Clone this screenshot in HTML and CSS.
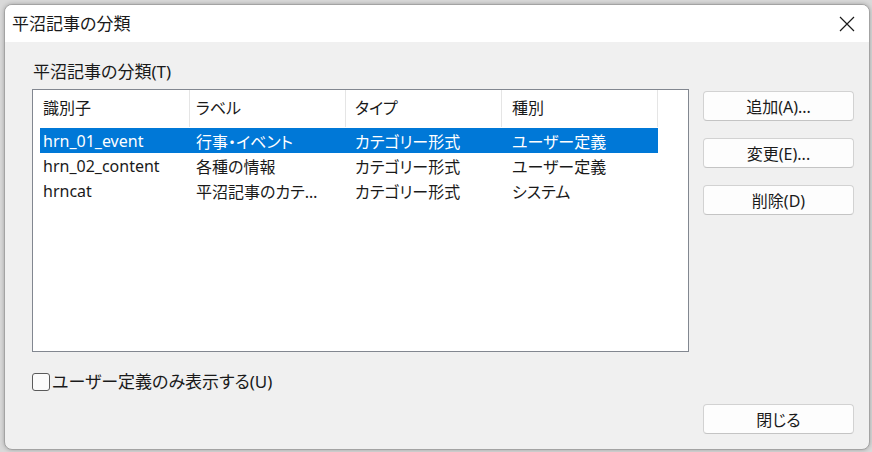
FILE: index.html
```html
<!DOCTYPE html>
<html lang="ja">
<head>
<meta charset="utf-8">
<title>平沼記事の分類</title>
<link rel="stylesheet" href="styles.css">
</head>
<body>
<div class="dialog">
  <div class="titlebar">
    <span class="title">平沼記事の分類</span>
    <span class="close">
      <svg width="16" height="16" viewBox="0 0 16 16"><path d="M1 1 L15 15 M15 1 L1 15" stroke="#1a1a1a" stroke-width="1.2" fill="none"/></svg>
    </span>
  </div>
  <div class="body">
    <div class="left">
      <div class="label">平沼記事の分類(T)</div>
      <div class="listbox">
        <div class="row header">
          <div class="cell">識別子</div>
          <div class="cell">ラベル</div>
          <div class="cell">タイプ</div>
          <div class="cell">種別</div>
        </div>
        <div class="row selected">
          <div class="cell">hrn_01_event</div>
          <div class="cell">行事・イベント</div>
          <div class="cell">カテゴリー形式</div>
          <div class="cell">ユーザー定義</div>
        </div>
        <div class="row">
          <div class="cell">hrn_02_content</div>
          <div class="cell">各種の情報</div>
          <div class="cell">カテゴリー形式</div>
          <div class="cell">ユーザー定義</div>
        </div>
        <div class="row">
          <div class="cell">hrncat</div>
          <div class="cell">平沼記事のカテ…</div>
          <div class="cell">カテゴリー形式</div>
          <div class="cell">システム</div>
        </div>
      </div>
      <label class="check">
        <span class="box"></span>
        <span>ユーザー定義のみ表示する(U)</span>
      </label>
    </div>
    <div class="right">
      <button class="btn">追加(A)...</button>
      <button class="btn">変更(E)...</button>
      <button class="btn">削除(D)</button>
      <button class="btn close-btn">閉じる</button>
    </div>
  </div>
</div>
</body>
</html>
```

FILE: styles.css
```css
html, body {
  margin: 0;
  padding: 0;
}
body {
  width: 872px;
  height: 452px;
  background: #d9d9d9;
  font-family: "Noto Sans", "Noto Sans CJK JP", sans-serif;
  font-feature-settings: "palt";
  color: #1a1a1a;
  overflow: hidden;
}
.dialog {
  margin: 4px 0 0 4px;
  width: 864px;
  height: 444px;
  border: 1px solid #a3a3a3;
  border-radius: 8px;
  background: #f0f0f0;
  overflow: hidden;
  display: flex;
  flex-direction: column;
  box-shadow: 0 0 4px rgba(0,0,0,0.25);
}
.titlebar {
  height: 37px;
  background: #ffffff;
  display: flex;
  align-items: center;
  justify-content: space-between;
  padding: 0 14px 0 7px;
  flex-shrink: 0;
}
.title {
  font-size: 17px;
  line-height: 22px;
}
.close {
  display: flex;
  width: 16px;
  height: 16px;
}
.body {
  flex: 1;
  display: flex;
  padding: 19px 14px 15px 27px;
}
.left {
  width: 657px;
  display: flex;
  flex-direction: column;
}
.label {
  font-size: 17px;
  line-height: 22px;
  padding-left: 1px;
  margin-bottom: 6px;
}
.listbox {
  height: 261px;
  border: 1px solid #828790;
  background: #ffffff;
  padding-left: 7px;
}
.row {
  display: grid;
  grid-template-columns: 150px 156px 156px 156px;
  width: 618px;
  height: 25px;
  align-items: center;
  font-size: 16px;
  white-space: nowrap;
}
.row .cell {
  overflow: hidden;
  padding-left: 9px;
}
.row .cell:first-child {
  padding-left: 3px;
}
.row .cell:nth-child(2) {
  padding-left: 6px;
}
.row .cell:nth-child(4) {
  padding-left: 10px;
}
.row.header {
  height: 37px;
  margin-bottom: 1px;
}
.row.header .cell {
  height: 37px;
  line-height: 37px;
  border-right: 1px solid #e5e5e5;
  box-sizing: border-box;
}
.row.selected {
  background: #0078d7;
  color: #ffffff;
}
.check {
  margin-top: 19px;
  display: flex;
  align-items: center;
  font-size: 17px;
  line-height: 22px;
}
.box {
  width: 18px;
  height: 18px;
  border: 1px solid #5a5a5a;
  border-radius: 3px;
  background: #fbfbfb;
  margin-right: 2px;
  box-sizing: border-box;
}
.right {
  margin-left: 14px;
  display: flex;
  flex-direction: column;
  padding-top: 30px;
}
.btn {
  width: 151px;
  height: 30px;
  margin-bottom: 17px;
  background: #fdfdfd;
  border: 1px solid #d2d2d2;
  border-bottom-color: #c4c4c4;
  border-radius: 4px;
  font-family: inherit;
  font-feature-settings: "palt";
  font-size: 16px;
  color: #1a1a1a;
  padding: 0;
}
.close-btn {
  margin-top: auto;
  margin-bottom: 0;
}
```
